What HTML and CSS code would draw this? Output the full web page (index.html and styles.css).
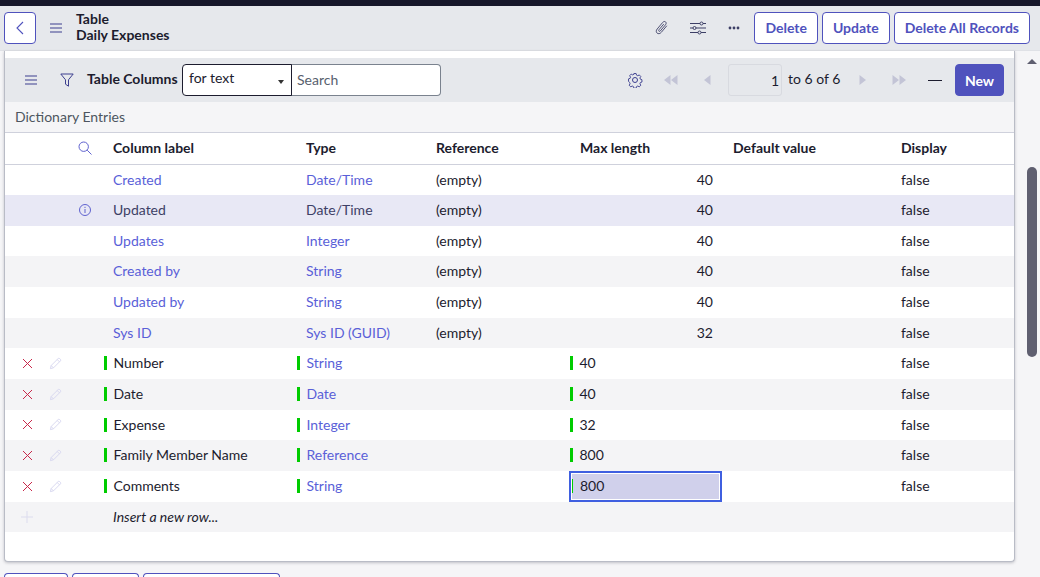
FILE: index.html
```html
<!DOCTYPE html>
<html lang="en">
<head>
  <meta charset="UTF-8">
  <meta name="viewport" content="width=device-width, initial-scale=1">
  <title>Table - Daily Expenses</title>
  <link rel="stylesheet" href="styles.css">
</head>
<body>
<svg class="sprites" width="0" height="0" aria-hidden="true">
  <symbol id="i-menu" viewBox="0 0 12 10"><path d="M0 1h12M0 5h12M0 9h12" fill="none" stroke="currentColor"/></symbol>
  <symbol id="i-pencil" viewBox="0 0 14 14"><path d="M1.500 12.500l.8-3.300L9.800 1.700a1.200 1.200 0 0 1 1.700 0l.8.8a1.200 1.200 0 0 1 0 1.700L4.800 11.700zM2.300 9.200l2.500 2.500M8.800 2.700l2.500 2.500" fill="none" stroke="currentColor"/></symbol>
</svg>

<div class="topline"></div>

<header class="formbar">
  <button class="btn btn-back" aria-label="Back">
    <svg width="10" height="14" viewBox="0 0 10 14"><path d="M8 1L2 7l6 6" fill="none" stroke="currentColor" stroke-width="1.100"/></svg>
  </button>
  <svg class="icon menu-icon" width="12" height="10"><use href="#i-menu"/></svg>
  <div class="formtitle">
    <div>Table</div>
    <div>Daily Expenses</div>
  </div>
  <div class="formactions">
    <svg class="icon clip" width="14" height="17" viewBox="0 0 16 18"><path d="M13.500 7l-6.300 7.500c-1.500 1.800-3.500 2-4.800.9s-1.300-3 .1-4.700l6.300-7.500c1-1.200 2.400-1.400 3.300-.6s.9 2.100-.1 3.300l-5.900 7c-.5.600-1.200.7-1.600.3s-.4-1.100.1-1.700l5.400-6.400" fill="none" stroke="currentColor"/></svg>
    <svg class="icon sliders" width="16" height="14" viewBox="0 0 16 14"><g fill="none" stroke="#3d3f66"><path d="M0 2.500h10M13 2.500h3M0 7h3M6 7h10M0 11.500h8M11 11.500h5"/><circle cx="11.500" cy="2.500" r="1.500"/><circle cx="4.500" cy="7" r="1.500"/><circle cx="9.500" cy="11.500" r="1.500"/></g></svg>
    <svg class="icon dots" width="12" height="4" viewBox="0 0 12 4"><g fill="#3d3f66"><circle cx="2" cy="2" r="1.400"/><circle cx="6" cy="2" r="1.400"/><circle cx="10" cy="2" r="1.400"/></g></svg>
    <button class="btn">Delete</button>
    <button class="btn">Update</button>
    <button class="btn">Delete All Records</button>
  </div>
</header>

<div class="content">
  <main class="main">
    <section class="card">
      <div class="listbar">
        <svg class="icon menu-icon" width="12" height="10"><use href="#i-menu"/></svg>
        <svg class="icon filter-icon" width="14" height="14" viewBox="0 0 14 14"><path d="M.8 1h12.400L8.500 6.800v6.400l-3-2V6.800z" fill="none" stroke="#3d3f8f"/></svg>
        <strong class="listname">Table Columns</strong>
        <div class="searchgroup">
          <div class="searchselect">for text<span class="caret"></span></div>
          <div class="searchinput">Search</div>
        </div>
        <div class="pager">
          <svg class="icon gear" width="16" height="16" viewBox="0 0 16 16"><g fill="none" stroke="#3d3f8f"><circle cx="8" cy="8" r="2.500"/><path d="M6.800 1h2.400l.5 1.800 1.300.6 1.600-.9 1.700 1.800-1 1.500.5 1.300 1.700.6v2.500l-1.700.6-.5 1.300 1 1.500-1.700 1.800-1.600-.9-1.300.6-.5 1.800H6.800l-.5-1.800-1.300-.6-1.600.9-1.700-1.800 1-1.500-.5-1.300L1 9.300V6.800l1.700-.6.500-1.300-1-1.500 1.700-1.800 1.600.9 1.300-.6z" transform="translate(.6 .6) scale(.925)"/></g></svg>
          <svg class="pg pg-first" width="14" height="10" viewBox="0 0 14 10"><path d="M6.500 0v10L0 5zM13.500 0v10L7 5z" fill="#c3c4d6"/></svg>
          <svg class="pg pg-prev" width="7" height="10" viewBox="0 0 7 10"><path d="M6.500 0v10L0 5z" fill="#c3c4d6"/></svg>
          <div class="pageinput">1</div>
          <span class="pagetext">to 6 of 6</span>
          <svg class="pg pg-next" width="7" height="10" viewBox="0 0 7 10"><path d="M.5 0v10L7 5z" fill="#c3c4d6"/></svg>
          <svg class="pg pg-last" width="14" height="10" viewBox="0 0 14 10"><path d="M.5 0v10L7 5zM7.500 0v10L14 5z" fill="#c3c4d6"/></svg>
          <span class="collapse"></span>
          <button class="btn btn-new">New</button>
        </div>
      </div>
      <div class="breadcrumb">Dictionary Entries</div>
      <table class="grid">
        <colgroup>
          <col class="c-del"><col class="c-edit"><col class="c-info"><col class="c-label"><col class="c-type"><col class="c-ref"><col class="c-max"><col class="c-def"><col class="c-disp">
        </colgroup>
        <thead>
          <tr>
            <th></th><th></th>
            <th class="iconcell infocell"><svg width="14" height="14" viewBox="0 0 14 14"><g fill="none" stroke="#5f62cf"><circle cx="5.700" cy="5.700" r="4.700"/><path d="M9.200 9.200l4.300 4.300"/></g></svg></th>
            <th>Column label</th><th>Type</th><th>Reference</th><th class="maxcell">Max length</th><th class="defcell">Default value</th><th>Display</th>
          </tr>
        </thead>
        <tbody>
          <tr>
            <td></td><td></td><td></td>
            <td><a>Created</a></td><td><a>Date/Time</a></td><td>(empty)</td><td class="num">40</td><td></td><td>false</td>
          </tr>
          <tr class="hover">
            <td></td><td></td>
            <td class="iconcell infocell"><svg width="14" height="14" viewBox="0 0 14 14"><g fill="none" stroke="#5f62cf"><circle cx="7" cy="7" r="5.500"/><path d="M7 6v4M7 3.800v1.200"/></g></svg></td>
            <td><a>Updated</a></td><td><a>Date/Time</a></td><td>(empty)</td><td class="num">40</td><td></td><td>false</td>
          </tr>
          <tr>
            <td></td><td></td><td></td>
            <td><a>Updates</a></td><td><a>Integer</a></td><td>(empty)</td><td class="num">40</td><td></td><td>false</td>
          </tr>
          <tr>
            <td></td><td></td><td></td>
            <td><a>Created by</a></td><td><a>String</a></td><td>(empty)</td><td class="num">40</td><td></td><td>false</td>
          </tr>
          <tr>
            <td></td><td></td><td></td>
            <td><a>Updated by</a></td><td><a>String</a></td><td>(empty)</td><td class="num">40</td><td></td><td>false</td>
          </tr>
          <tr>
            <td></td><td></td><td></td>
            <td><a>Sys ID</a></td><td><a>Sys ID (GUID)</a></td><td>(empty)</td><td class="num">32</td><td></td><td>false</td>
          </tr>
          <tr>
            <td class="iconcell"><svg class="del" width="11" height="11" viewBox="0 0 11 11"><path d="M1 1l9 9M10 1l-9 9" fill="none" stroke="#c8284a"/></svg></td>
            <td class="iconcell"><svg class="edit" width="13" height="13"><use href="#i-pencil"/></svg></td>
            <td></td>
            <td><span class="changed">Number</span></td><td><span class="changed"><a>String</a></span></td><td></td><td class="maxcell"><span class="changed">40</span></td><td></td><td>false</td>
          </tr>
          <tr>
            <td class="iconcell"><svg class="del" width="11" height="11" viewBox="0 0 11 11"><path d="M1 1l9 9M10 1l-9 9" fill="none" stroke="#c8284a"/></svg></td>
            <td class="iconcell"><svg class="edit" width="13" height="13"><use href="#i-pencil"/></svg></td>
            <td></td>
            <td><span class="changed">Date</span></td><td><span class="changed"><a>Date</a></span></td><td></td><td class="maxcell"><span class="changed">40</span></td><td></td><td>false</td>
          </tr>
          <tr>
            <td class="iconcell"><svg class="del" width="11" height="11" viewBox="0 0 11 11"><path d="M1 1l9 9M10 1l-9 9" fill="none" stroke="#c8284a"/></svg></td>
            <td class="iconcell"><svg class="edit" width="13" height="13"><use href="#i-pencil"/></svg></td>
            <td></td>
            <td><span class="changed">Expense</span></td><td><span class="changed"><a>Integer</a></span></td><td></td><td class="maxcell"><span class="changed">32</span></td><td></td><td>false</td>
          </tr>
          <tr>
            <td class="iconcell"><svg class="del" width="11" height="11" viewBox="0 0 11 11"><path d="M1 1l9 9M10 1l-9 9" fill="none" stroke="#c8284a"/></svg></td>
            <td class="iconcell"><svg class="edit" width="13" height="13"><use href="#i-pencil"/></svg></td>
            <td></td>
            <td><span class="changed">Family Member Name</span></td><td><span class="changed"><a>Reference</a></span></td><td></td><td class="maxcell"><span class="changed">800</span></td><td></td><td>false</td>
          </tr>
          <tr>
            <td class="iconcell"><svg class="del" width="11" height="11" viewBox="0 0 11 11"><path d="M1 1l9 9M10 1l-9 9" fill="none" stroke="#c8284a"/></svg></td>
            <td class="iconcell"><svg class="edit" width="13" height="13"><use href="#i-pencil"/></svg></td>
            <td></td>
            <td><span class="changed">Comments</span></td><td><span class="changed"><a>String</a></span></td><td></td><td class="maxcell selected"><span class="changed">800</span></td><td></td><td>false</td>
          </tr>
          <tr>
            <td class="iconcell"><svg class="add" width="14" height="14" viewBox="0 0 14 14"><path d="M7 1v12M1 7h12" fill="none" stroke="currentColor"/></svg></td>
            <td></td><td></td>
            <td colspan="2"><em>Insert a new row...</em></td><td></td><td></td><td></td><td></td>
          </tr>
        </tbody>
      </table>
    </section>
    <div class="bottombtns">
      <button class="btn b1" aria-label="Delete"></button>
      <button class="btn b2" aria-label="Update"></button>
      <button class="btn b3" aria-label="Delete All Records"></button>
    </div>
  </main>
  <div class="scroller">
    <span class="scrollup"></span>
    <span class="thumb"></span>
  </div>
</div>
</body>
</html>
```

FILE: styles.css
```css
* {
  box-sizing: border-box;
}
html, body {
  height: 100%;
}
body {
  margin: 0;
  height: 577px;
  overflow: hidden;
  display: flex;
  flex-direction: column;
  font-family: Lato, "Liberation Sans", sans-serif;
  font-size: 14px;
  color: #1c1c2e;
  background: #f5f5f7;
}
.sprites {
  position: absolute;
}
.icon {
  color: #3d3f8f;
  flex: none;
  display: block;
}
.topline {
  height: 6px;
  flex: none;
  background: #16172a;
}

.btn {
  height: 32px;
  padding: 0 10px;
  font: 700 14px Lato, "Liberation Sans", sans-serif;
  color: #4f52bd;
  background: #fff;
  border: 1px solid #4f52bd;
  border-radius: 4px;
}

.formbar {
  height: 45px;
  flex: none;
  display: flex;
  align-items: center;
  padding: 0 10px 1px 4px;
  background: #e6e8ec;
  border-bottom: 1px solid #dfe1e6;
}
.btn-back {
  width: 32px;
  padding: 0;
  display: flex;
  align-items: center;
  justify-content: center;
}
.formbar .menu-icon {
  margin-left: 14px;
}
.formtitle {
  margin: -2px 0 0 14px;
  font-weight: 700;
  line-height: 16px;
}
.formactions {
  margin-left: auto;
  display: flex;
  align-items: center;
  gap: 4px;
}
.formactions .icon {
  color: #3d3f66;
}
.sliders {
  margin: 0 18px 0 17px;
}
.dots {
  margin-right: 10px;
}

.content {
  flex: 1;
  display: flex;
  min-height: 0;
}
.main {
  width: 1015px;
  flex: none;
  padding-left: 4px;
}
.card {
  height: 511px;
  background: #fff;
  border: 1px solid #b9bcc6;
  border-top: 0;
  border-radius: 0 0 4px 4px;
  box-shadow: 0 1px 3px rgba(40, 40, 60, 0.25);
  padding-top: 7px;
}
.listbar {
  height: 44px;
  display: flex;
  align-items: center;
  background: #e6e8ec;
  padding-left: 20px;
}
.filter-icon {
  margin-left: 23px;
}
.listname {
  margin: 0 0 3px 13px;
  width: 95px;
  flex: none;
}
.searchgroup {
  display: flex;
  height: 32px;
}
.searchselect {
  position: relative;
  width: 110px;
  padding-left: 6px;
  line-height: 26px;
  background: #fff;
  border: 1px solid #1c1c2e;
  border-radius: 4px 0 0 4px;
}
.caret {
  position: absolute;
  right: 7px;
  top: 15px;
  border: 3px solid transparent;
  border-top: 4px solid #333;
  border-bottom: 0;
}
.searchinput {
  width: 150px;
  margin-left: -1px;
  padding-left: 5px;
  line-height: 30px;
  color: #58606e;
  background: #fff;
  border: 1px solid #7a828e;
  border-left-color: #1c1c2e;
  border-radius: 0 4px 4px 0;
}
.pager {
  margin-left: auto;
  display: flex;
  align-items: center;
  padding-right: 10px;
}
.pg {
  flex: none;
  display: block;
}
.pg-first {
  margin-left: 21px;
}
.pg-prev {
  margin-left: 26px;
}
.pageinput {
  width: 54px;
  height: 32px;
  margin-left: 17px;
  padding-right: 2px;
  line-height: 31px;
  text-align: right;
  background: #e6e8ec;
  border: 1px solid #d8dae0;
  border-radius: 3px;
}
.pagetext {
  margin: 0 0 3px 6px;
  width: 54px;
  white-space: nowrap;
}
.pg-next {
  margin-left: 17px;
}
.pg-last {
  margin-left: 26px;
}
.collapse {
  width: 14px;
  height: 1px;
  margin-left: 22px;
  background: #1c1c2e;
}
.btn-new {
  width: 49px;
  padding: 0;
  margin-left: 13px;
  color: #fff;
  background: #4f52bd;
}

.breadcrumb {
  height: 30px;
  padding-left: 10px;
  line-height: 29px;
  color: #4d5560;
  background: #f5f5f7;
}
.grid {
  width: 1009px;
  table-layout: fixed;
  border-collapse: separate;
  border-spacing: 0;
}
.c-del { width: 44px; }
.c-edit { width: 13px; }
.c-info { width: 42px; }
.c-label { width: 193px; }
.c-type { width: 130px; }
.c-ref { width: 142px; }
.c-max { width: 153px; }
.c-def { width: 170px; }
.grid th {
  height: 32.500px;
  padding: 0 9px 2px;
  text-align: left;
  font-weight: 700;
  border-top: 1px solid #cfd1dc;
  border-bottom: 1px solid #cfd1dc;
}
.grid td {
  height: 30.650px;
  padding: 0 9px 1.500px;
  white-space: nowrap;
}
.grid tbody tr:nth-child(even) td {
  background: #f4f4f6;
}
.grid tbody tr.hover td {
  background: #e8e8f5;
}
.grid a {
  color: #5a5fd8;
}
.grid .hover a {
  color: #3d3f66;
}
.grid .num {
  text-align: right;
}
.grid .iconcell {
  padding: 0;
  text-align: center;
}
.grid .infocell {
  padding-left: 4px;
}
.grid .maxcell {
  padding-left: 11px;
}
.grid .defcell {
  padding-left: 11px;
}
.iconcell svg {
  display: block;
  margin: 0 auto;
}
.edit {
  color: #d6d6ef;
}
.add {
  color: #dcdcee;
}
.changed {
  display: inline-block;
  margin-left: -9px;
  padding-left: 6.500px;
  line-height: 14px;
  border-left: 3px solid #00cc00;
}
.maxcell .changed {
  margin-left: -10px;
}
.grid td.selected {
  background: #d0d0eb;
  box-shadow: inset 0 0 0 2px #3f5fe0, inset 0 0 0 3px #fff;
}
.selected .changed,
.maxcell.selected .changed {
  margin-left: -8px;
  padding-left: 7px;
  border-left-width: 1px;
}

.bottombtns {
  display: flex;
  gap: 4px;
  margin-top: 11px;
}
.bottombtns .btn {
  height: 4px;
  padding: 0;
  border-bottom: 0;
  border-radius: 4px 4px 0 0;
}
.b1 { width: 64px; }
.b2 { width: 67px; }
.b3 { width: 137px; }

.scroller {
  flex: 1;
  padding: 8px 0 0 12px;
  display: flex;
  flex-direction: column;
}
.scrollup {
  width: 0;
  border: 5px solid transparent;
  border-bottom: 5px solid #5f5f70;
  border-top: 0;
}
.thumb {
  width: 10px;
  height: 190px;
  margin-top: 103px;
  border-radius: 5px;
  background: #5f5f70;
}
```
